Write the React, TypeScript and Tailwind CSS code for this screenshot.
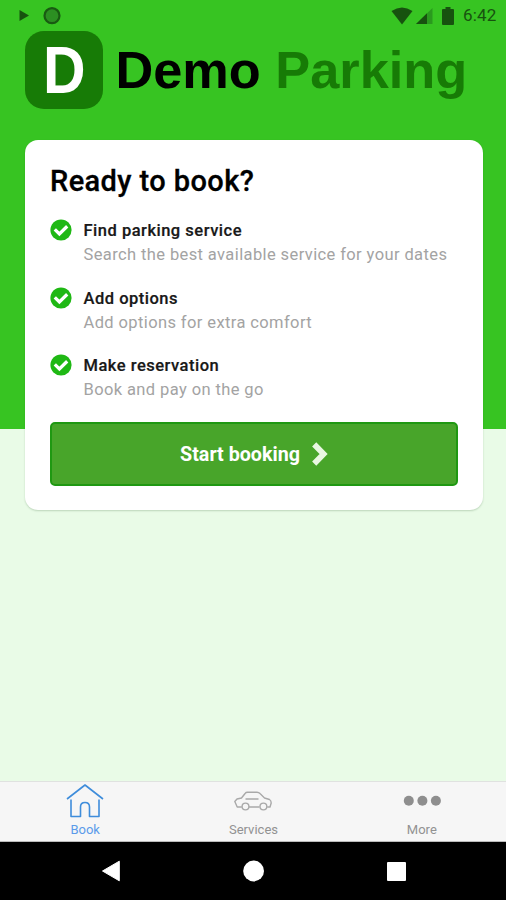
import type { ReactNode } from "react";

const STEPS = [
  { title: "Find parking service", desc: "Search the best available service for your dates" },
  { title: "Add options", desc: "Add options for extra comfort" },
  { title: "Make reservation", desc: "Book and pay on the go" },
];

function StatusBar() {
  return (
    <div className="flex h-[31px] items-center justify-between pl-[19px] pr-[8px] text-[#17520f]">
      <div className="flex items-center gap-[14px]">
        <svg width="10" height="12" viewBox="0 0 10 12" fill="currentColor">
          <path d="M0.5 0 L10 5.5 L0.5 11 Z" />
        </svg>
        <svg width="18" height="18" viewBox="0 0 18 18">
          <circle cx="9" cy="8.7" r="7.5" fill="#2c8f22" stroke="#195a12" strokeWidth="2.2" />
        </svg>
      </div>
      <div className="flex items-center">
        <svg width="22" height="18" viewBox="0 0 22 18" fill="currentColor">
          <path d="M0.5 4 Q11 -3 21.5 4 L11 17.5 Z" />
        </svg>
        <svg width="17" height="16" viewBox="0 0 17 16" className="ml-[3px]">
          <path d="M16.5 0 V16 H0 Z" fill="#2a9a1e" />
          <path d="M11 5.3 V16 H0 Z" fill="#17520f" />
        </svg>
        <svg width="12" height="18" viewBox="0 0 12 18" fill="currentColor" className="ml-[9px]">
          <path d="M3.5 0 H8.5 V2 H11 Q12 2 12 3 V17 Q12 18 11 18 H1 Q0 18 0 17 V3 Q0 2 1 2 H3.5 Z" />
        </svg>
        <span className="ml-[9px] w-[35px] whitespace-nowrap text-[17px] leading-none tracking-[0.2px]">6:42</span>
      </div>
    </div>
  );
}

function Logo() {
  return (
    <div className="flex h-[78px] items-center pl-[25px] font-['Liberation_Sans',sans-serif] font-bold">
      <div className="flex size-[78px] items-center justify-center rounded-[19px] bg-[#177b06] pb-px text-[67px] leading-none text-white">
        <span className="scale-x-[0.88]">D</span>
      </div>
      <div className="ml-[12.5px] whitespace-nowrap text-[52.3px] leading-[60px] text-black">
        Demo <span className="text-[#177b06]">Parking</span>
      </div>
    </div>
  );
}

function CheckBadge() {
  return (
    <svg width="22" height="22" viewBox="0 0 22 22" className="shrink-0">
      <circle cx="11" cy="11" r="10.6" fill="#1fb814" />
      <path d="M4.8 10.4 L9.4 14.9 L17.2 7.3" fill="none" stroke="#fff" strokeWidth="3.3" />
    </svg>
  );
}

function BookingCard() {
  return (
    <div className="ml-[25px] mr-[23px] mt-[31px] h-[370px] rounded-[13px] bg-white px-[25px] pt-[23px] shadow-[0_1px_2px_rgba(0,60,0,0.2)]">
      <h1 className="whitespace-nowrap text-[29px] font-medium leading-[36px] tracking-[0.4px] text-black [-webkit-text-stroke:0.3px]">
        Ready to book?
      </h1>
      <ul className="mt-[20px] flex flex-col gap-[19.5px]">
        {STEPS.map((step) => (
          <li key={step.title} className="flex h-12 gap-[11.5px]">
            <CheckBadge />
            <div className="whitespace-nowrap">
              <p className="text-[16.5px] font-medium leading-[23px] tracking-[0.5px] text-[#181818] [-webkit-text-stroke:0.2px]">
                {step.title}
              </p>
              <p className="text-[16.5px] leading-[25px] tracking-[0.39px] text-[#a3a3a3]">{step.desc}</p>
            </div>
          </li>
        ))}
      </ul>
      <button className="mt-[20px] flex h-[64px] w-[408px] items-center justify-center rounded-[5px] border-2 border-[#1f9812] bg-[#48a52a] text-white">
        <span className="whitespace-nowrap pt-[2px] text-[19.7px] font-bold leading-6">Start booking</span>
        <svg width="16" height="24" viewBox="0 0 16 24" className="ml-[12px]">
          <path d="M2.2 2.4 L11.6 12 L2.2 21.6" fill="none" stroke="#e9f7e2" strokeWidth="5.8" />
        </svg>
      </button>
    </div>
  );
}

function Tab({ label, active, children }: { label: string; active?: boolean; children: ReactNode }) {
  return (
    <div className={`flex flex-1 flex-col items-center ${active ? "text-[#5b9bea]" : "text-[#929292]"}`}>
      <div className="flex h-[37px] items-center">{children}</div>
      <span className="mt-[3px] text-[13px] leading-4">{label}</span>
    </div>
  );
}

function TabBar() {
  return (
    <nav className="flex h-[61px] border-y border-t-[#e0e2e0] border-b-[#bbb] bg-[#f6f6f6] pl-px">
      <Tab label="Book" active>
        <svg width="38" height="34" viewBox="0 0 38 34" fill="none" stroke="#3f8ddb" strokeWidth="1.6" strokeLinejoin="round">
          <path d="M1 15 L19 1 L37 15" />
          <path d="M5 15.5 V32.5 H14.5 V23 Q14.5 18.5 19 18.5 Q23.5 18.5 23.5 23 V32.5 H33 V15.5" />
        </svg>
      </Tab>
      <Tab label="Services">
        <svg width="38" height="20" viewBox="0 0 38 20" fill="none" stroke="#a9a9a9" strokeWidth="1.4" strokeLinejoin="round">
          <path d="M7.8 16 H3.2 L0.8 10.5 L3 8 L7.5 7 L11.3 2.2 Q12 1.2 13.5 1.2 H23 Q24.8 1.2 26 2.5 L30.5 7 L35.5 8.5 Q37.2 9.5 37.2 12 L36 16 H33.2" />
          <path d="M15 16 H25.5 M11.5 8 H24.5" />
          <circle cx="11.5" cy="15.5" r="3.4" />
          <circle cx="29.4" cy="15.5" r="3.4" />
        </svg>
      </Tab>
      <Tab label="More">
        <svg width="38" height="12" viewBox="0 0 38 12" fill="#8e8e8e">
          <circle cx="5.8" cy="5.7" r="5" />
          <circle cx="19.4" cy="5.7" r="5" />
          <circle cx="32.9" cy="5.7" r="5" />
        </svg>
      </Tab>
    </nav>
  );
}

function NavigationBar() {
  return (
    <div className="flex h-[58px] items-center justify-between bg-black pl-[101px] pr-[100px]">
      <svg width="20" height="22" viewBox="0 0 20 22" fill="#fff">
        <path d="M1.5 11 L18.3 1.2 V20.8 Z" stroke="#fff" strokeLinejoin="round" />
      </svg>
      <svg width="22" height="22" viewBox="0 0 22 22" fill="#fff">
        <circle cx="10.6" cy="11" r="10.4" />
      </svg>
      <div className="size-[19px] rounded-[1px] bg-white" />
    </div>
  );
}

export default function App() {
  return (
    <div className="flex h-[900px] w-[506px] flex-col overflow-hidden bg-[linear-gradient(#37c422_429px,#e9fbe7_429px)] font-[Roboto,sans-serif]">
      <StatusBar />
      <Logo />
      <BookingCard />
      <div className="flex-1" />
      <TabBar />
      <NavigationBar />
    </div>
  );
}
